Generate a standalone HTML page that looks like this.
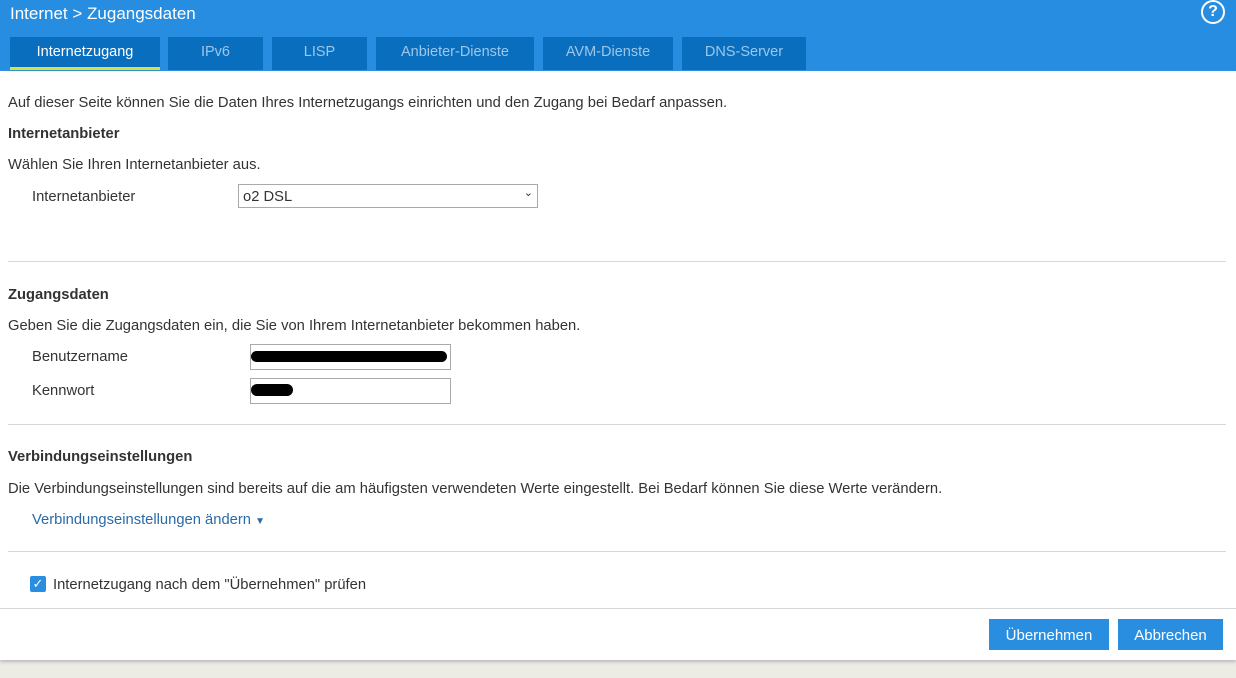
<!DOCTYPE html><html><head><style>
body{margin:0;width:1236px;height:678px;background:#ecebe4;font-family:"Liberation Sans",sans-serif;font-size:14.75px;color:#333;position:relative;overflow:hidden}
.hd{position:absolute;left:0;top:0;width:1236px;height:71px;background:#268de0}
.t{position:absolute;top:37px;height:33px;background:#0a6ebe;color:#9cc7ea;text-align:center;line-height:31px;font-size:14.5px}
.t.a{color:#fff;border-bottom:3px solid #d9e23a;height:30px}
.main{position:absolute;left:0;top:71px;width:1236px;height:589px;background:#fff;box-shadow:0 2px 3px #bbb}
.x{position:absolute;white-space:nowrap}
.b{font-weight:bold}
.hr{position:absolute;left:8px;width:1218px;height:1px;background:#d6d6d6}
.in{position:absolute;border:1px solid #aaa;background:#fff;height:24px}
.btn{position:absolute;top:619px;height:31px;background:#2a8ee0;color:#fff;text-align:center;line-height:33px;font-size:15px}
</style></head><body>
<div class="hd"></div>
<div class="x" style="left:10px;top:4px;color:#fff;font-size:17px">Internet &gt; Zugangsdaten</div>
<div class="x" style="left:1201px;top:0;width:20px;height:20px;border:2px solid #fff;border-radius:50%;color:#fff;text-align:center;font-weight:bold;font-size:16px;line-height:20px">?</div>
<div class="t a" style="left:10px;width:150px">Internetzugang</div>
<div class="t" style="left:168px;width:95px">IPv6</div>
<div class="t" style="left:272px;width:95px">LISP</div>
<div class="t" style="left:376px;width:158px">Anbieter-Dienste</div>
<div class="t" style="left:543px;width:130px">AVM-Dienste</div>
<div class="t" style="left:682px;width:124px">DNS-Server</div>
<div class="main"></div>
<div class="x" style="left:8px;top:95px">Auf dieser Seite können Sie die Daten Ihres Internetzugangs einrichten und den Zugang bei Bedarf anpassen.</div>
<div class="x b" style="left:8px;top:126px">Internetanbieter</div>
<div class="x" style="left:8px;top:157px">Wählen Sie Ihren Internetanbieter aus.</div>
<div class="x" style="left:32px;top:189px">Internetanbieter</div>
<div class="in" style="left:238px;top:184px;width:298px;height:22px"><span style="position:absolute;left:4px;top:4px">o2 DSL</span><span style="position:absolute;right:4px;top:1px;font-size:11px">&#8964;</span></div>
<div class="hr" style="top:261px"></div>
<div class="x b" style="left:8px;top:287px">Zugangsdaten</div>
<div class="x" style="left:8px;top:318px">Geben Sie die Zugangsdaten ein, die Sie von Ihrem Internetanbieter bekommen haben.</div>
<div class="x" style="left:32px;top:349px">Benutzername</div>
<div class="in" style="left:250px;top:344px;width:199px"><div style="position:absolute;left:0;top:6px;width:196px;height:11px;background:#000;border-radius:6px"></div></div>
<div class="x" style="left:32px;top:383px">Kennwort</div>
<div class="in" style="left:250px;top:378px;width:199px"><div style="position:absolute;left:0;top:5px;width:42px;height:12px;background:#000;border-radius:6px"></div></div>
<div class="hr" style="top:424px"></div>
<div class="x b" style="left:8px;top:449px">Verbindungseinstellungen</div>
<div class="x" style="left:8px;top:481px">Die Verbindungseinstellungen sind bereits auf die am häufigsten verwendeten Werte eingestellt. Bei Bedarf können Sie diese Werte verändern.</div>
<div class="x" style="left:32px;top:512px;color:#2a6aa8">Verbindungseinstellungen ändern <span style="font-size:10px">&#9660;</span></div>
<div class="hr" style="top:551px"></div>
<div class="x" style="left:30px;top:576px;width:16px;height:16px;background:#2a8ee0;border-radius:2px;color:#fff;font-size:13px;text-align:center;line-height:16px">&#10003;</div>
<div class="x" style="left:53px;top:577px">Internetzugang nach dem "Übernehmen" prüfen</div>
<div class="hr" style="top:608px;left:0;width:1236px"></div>
<div class="btn" style="left:989px;width:120px">Übernehmen</div>
<div class="btn" style="left:1118px;width:105px">Abbrechen</div>
</body></html>
